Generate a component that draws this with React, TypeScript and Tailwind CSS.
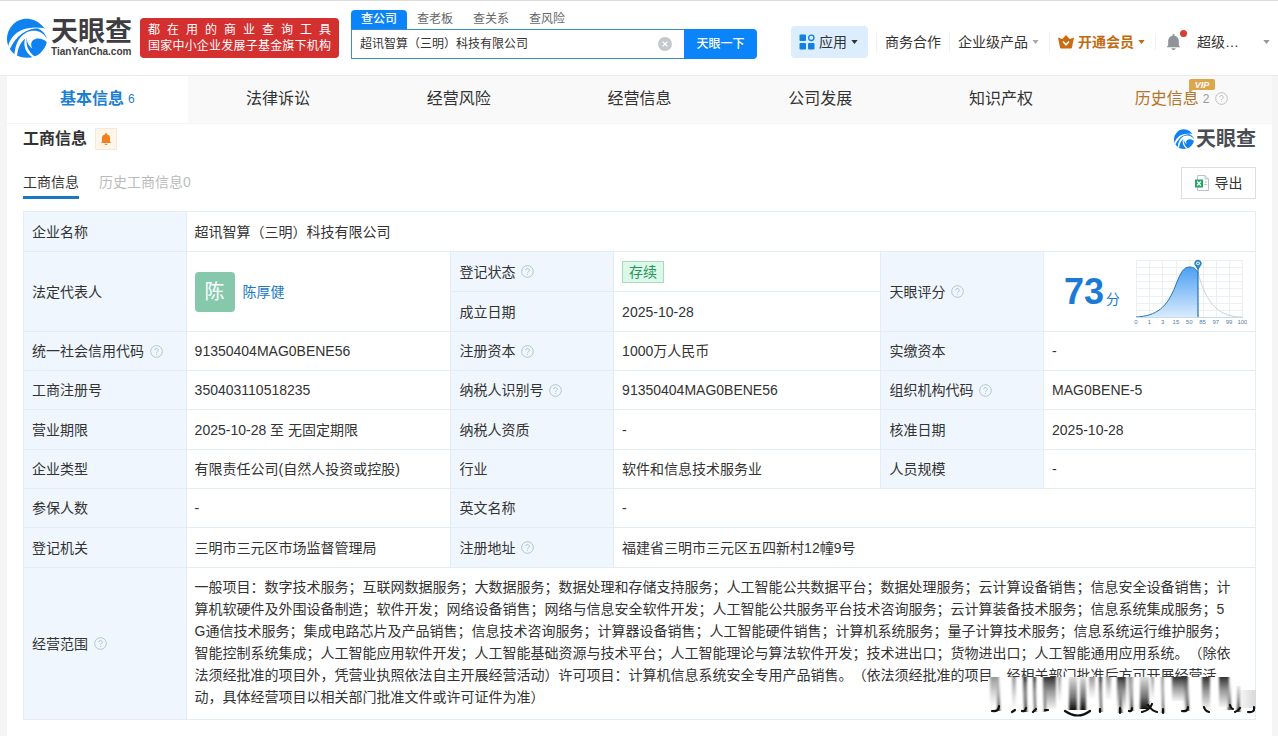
import { useState } from "react";
import type { ReactNode } from "react";

const NAV = ["法律诉讼", "经营风险", "经营信息", "公司发展", "知识产权"];
const SEARCH_TABS = ["查公司", "查老板", "查关系", "查风险"];

const SCOPE = [
  "一般项目：数字技术服务；互联网数据服务；大数据服务；数据处理和存储支持服务；人工智能公共数据平台；数据处理服务；云计算设备销售；信息安全设备销售；计",
  "算机软硬件及外围设备制造；软件开发；网络设备销售；网络与信息安全软件开发；人工智能公共服务平台技术咨询服务；云计算装备技术服务；信息系统集成服务；5",
  "G通信技术服务；集成电路芯片及产品销售；信息技术咨询服务；计算器设备销售；人工智能硬件销售；计算机系统服务；量子计算技术服务；信息系统运行维护服务；",
  "智能控制系统集成；人工智能应用软件开发；人工智能基础资源与技术平台；人工智能理论与算法软件开发；技术进出口；货物进出口；人工智能通用应用系统。（除依",
  "法须经批准的项目外，凭营业执照依法自主开展经营活动）许可项目：计算机信息系统安全专用产品销售。（依法须经批准的项目，经相关部门批准后方可开展经营活",
  "动，具体经营项目以相关部门批准文件或许可证件为准）",
];

// x, width, height, tone of every streak in the seal
const STREAKS = [
  [2, 9, 32, "b"],
  [24, 4, 34, "b"],
  [35, 4, 35, "a"],
  [45, 3, 35, "a"],
  [55, 13, 34, "a"],
  [70, 3, 28, "b"],
  [81, 8, 35, "c"],
  [92, 6, 35, "c"],
  [101, 6, 24, "b"],
  [111, 3, 36, "a"],
  [118, 5, 26, "b"],
  [129, 9, 34, "a"],
  [140, 5, 35, "b"],
  [152, 9, 34, "c"],
  [163, 3, 26, "b"],
  [173, 3, 36, "b"],
  [184, 13, 26, "a"],
  [196, 4, 36, "a"],
  [214, 8, 34, "a"],
  [231, 10, 32, "a"],
] as const;

function Swirl({ className }: { className: string }) {
  return (
    <svg viewBox="0 0 38 38" className={className} aria-hidden="true">
      <path d="M33 7C26 -1 12 -2 5 7C-3 16 -1 29 8 35C15 39 26 39 32 33C36 29 37.500 26 38 21C37 15 34 12 29 10C32 9 34 9 36 10Z" fill="#0f82f0" />
      <path d="M1 27C4 15 15 6 36 10C21 8 10 14 2.500 30Z" fill="#fff" />
      <path d="M7 35C8 25 11 18 18 14C25 10.500 34 12 38 20L38 23C34 19 28 18.500 25 21C22.500 23 22.500 26 24 29C20 26 18.500 22 19 18.500C13 22 10.500 28 9.500 36Z" fill="#fff" />
      <path d="M19 18C17.500 26 20 32 27 37L24.500 37.500C17 33 15 25 17.500 19Z" fill="#fff" />
    </svg>
  );
}

function Caret({ className }: { className: string }) {
  return (
    <svg viewBox="0 0 8 5" className={`h-1 w-[7px] shrink-0 ${className}`} fill="currentColor" aria-hidden="true">
      <path d="M0 0h8L4 5z" />
    </svg>
  );
}

function Hint({ className = "text-[#a9c3d6]" }: { className?: string }) {
  return (
    <svg viewBox="0 0 14 14" className={`ml-1.5 inline-block size-[13px] shrink-0 ${className}`} fill="none" stroke="currentColor" aria-hidden="true">
      <circle cx="7" cy="7" r="6.3" />
      <path d="M5.1 5.6a1.9 1.9 0 1 1 2.8 1.7c-.7.4-.9.7-.9 1.4M7 9.8v1" />
    </svg>
  );
}

function Bell({ className }: { className: string }) {
  return (
    <svg viewBox="0 0 16 18" className={className} fill="currentColor" aria-hidden="true">
      <path d="M7 0h2v2c3 .5 5 2.700 5 5.500V13l1.500 1.500v.5H.5v-.5L2 13V7.500C2 4.700 4 2.500 7 2zM5.500 16h5c-.3 1.200-1.300 2-2.500 2s-2.200-.8-2.500-2z" />
    </svg>
  );
}

function Label({ children, hint, rowSpan }: { children: ReactNode; hint?: boolean; rowSpan?: number }) {
  return (
    <th scope="row" rowSpan={rowSpan} className="border border-[#e3edf4] bg-[#eff6fd] px-2 text-left font-normal">
      <span className="flex items-center">
        {children}
        {hint ? <Hint /> : null}
      </span>
    </th>
  );
}

function Value({ children, colSpan, rowSpan }: { children: ReactNode; colSpan?: number; rowSpan?: number }) {
  return (
    <td colSpan={colSpan} rowSpan={rowSpan} className="border border-[#e3edf4] px-2">
      {children}
    </td>
  );
}

function ScoreChart() {
  return (
    <svg viewBox="0 0 114 70" className="h-[70px] w-[114px] shrink-0" role="img" aria-label="天眼评分">
      <defs>
        <linearGradient id="score" x1="0" y1="0" x2="0" y2="1">
          <stop offset="0" stopColor="#4b9ff3" />
          <stop offset="1" stopColor="#d9ebfd" />
        </linearGradient>
      </defs>
      <g stroke="#edf0f3" strokeWidth="1" fill="none">
        <path d="M3 3.500H110M3 10.500H110M3 17.500H110M3 24.500H110M3 31.500H110M3 39.500H110M3 46.500H110M3 53.500H110" />
        <path d="M3.500 3V60M16.500 3V60M29.500 3V60M43.500 3V60M56.500 3V60M70.500 3V60M83.500 3V60M96.500 3V60M109.500 3V60" />
      </g>
      <path d="M3 60C24 59 34 50 42 30C48 14 51 10 57 10C61 10 63 12 65 16V60Z" fill="url(#score)" />
      <path d="M3 60C24 59 34 50 42 30C48 14 51 10 57 10C61 10 63 12 65 16" fill="none" stroke="#2a76ac" />
      <path d="M65 16C72 40 81 60 109 60" fill="none" stroke="#ccd3dd" />
      <path d="M3 60.500H110" stroke="#c5dcea" />
      <path d="M65 10V60" stroke="#2272ad" strokeWidth="1.200" />
      <path d="M65 13L62 8.500A3.600 3.600 0 1 1 68 8.500Z" fill="#2b86bd" />
      <circle cx="65" cy="6.300" r="1.900" fill="#d9f2fa" />
      <circle cx="65" cy="6.300" r="0.900" fill="#2b86bd" />
      <g fontSize="6" fontFamily="Liberation Sans, sans-serif" fill="#557f9b" textAnchor="middle">
        {["0", "1", "3", "15", "50", "85", "97", "99", "100"].map((t, i) => (
          <text key={t} x={3 + i * 13.3} y="67">
            {t}
          </text>
        ))}
      </g>
    </svg>
  );
}

function Seal() {
  return (
    <svg viewBox="0 0 268 44" className="absolute -right-px bottom-px h-11 w-[268px]" aria-hidden="true">
      <defs>
        <linearGradient id="a" x1="0" y1="0" x2="0" y2="1">
          <stop offset="0" stopColor="#333" />
          <stop offset="0.45" stopColor="#999" />
          <stop offset="1" stopColor="#f4f4f4" />
        </linearGradient>
        <linearGradient id="b" x1="0" y1="0" x2="0" y2="1">
          <stop offset="0" stopColor="#999" />
          <stop offset="0.6" stopColor="#ddd" />
          <stop offset="1" stopColor="#fff" />
        </linearGradient>
        <linearGradient id="c" x1="0" y1="0" x2="0" y2="1">
          <stop offset="0" stopColor="#ddd" />
          <stop offset="0.6" stopColor="#777" />
          <stop offset="1" stopColor="#111" />
        </linearGradient>
        <linearGradient id="d" x1="0" y1="0" x2="0" y2="1">
          <stop offset="0" stopColor="#aaa" stopOpacity="0" />
          <stop offset="1" stopColor="#111" />
        </linearGradient>
        <linearGradient id="e" x1="0" y1="0" x2="1" y2="0">
          <stop offset="0" stopColor="#ccc" stopOpacity="0" />
          <stop offset="1" stopColor="#bbb" />
        </linearGradient>
        <filter id="soft" x="-5%" y="-5%" width="110%" height="110%">
          <feGaussianBlur stdDeviation="0.9 0.1" />
        </filter>
      </defs>
      <path d="M0 3H248V38H0Z" fill="#fff" />
      <g filter="url(#soft)">
        {STREAKS.map(([x, w, h, tone]) => (
          <rect key={x} x={x} y="3" width={w} height={h - 2} fill={`url(#${tone})`} />
        ))}
        <path d="M9 3h3v34H9zM36 8h3v30h-3zM56 8h2v30h-2zM46 8h2v30h-2zM112 8h2v30h-2zM131 6h3v33h-3zM142 6h3v31h-3zM174 6h2v33h-2zM198 6h3v31h-3zM240 4h3v32h-3zM249 12h3v26h-3z" fill="url(#d)" />
        <path d="M246 16H268V34H246Z" fill="url(#e)" opacity="0.6" />
      </g>
      <g fill="none" stroke="#111" strokeWidth="2.200" strokeLinecap="round">
        <path d="M11 32Q11 38 4 37M27 36L24 38M38 34Q37 38 34 37M48 35L45 38M57 36H60M77 37Q90 46 102 37M112 35V38M132 34V39M144 34Q144 38 141 37M154 38Q162 36 164 30M160 31Q164 37 169 38M175 35V39M200 33Q200 38 194 37M216 33Q217 37 221 38M242 31Q243 35 245 35M252 34Q250 37 247 38M266 33Q267 39 260 38" />
      </g>
    </svg>
  );
}

function Header() {
  const [query, setQuery] = useState("超讯智算（三明）科技有限公司");
  const [tab, setTab] = useState(0);

  return (
    <header className="flex h-[76px] items-center border-t border-b border-t-[#dcdcdc] border-b-[#ebebeb] bg-white pr-2 pl-[7px]">
      <a href="#home" className="flex shrink-0 items-center gap-1">
        <Swirl className="size-10" />
        <span className="flex flex-col text-[#3e3e42]">
          <span className="text-[27px] leading-7 font-bold">天眼查</span>
          <span className="text-[10px] leading-3 font-bold">TianYanCha.com</span>
        </span>
      </a>
      <div className="ml-2 w-[199px] shrink-0 rounded-sm bg-[#d3302f] px-2 py-1 text-xs leading-4 text-white">
        <p className="[text-align-last:justify]">都 在 用 的 商 业 查 询 工 具</p>
        <p className="[text-align-last:justify]">国家中小企业发展子基金旗下机构</p>
      </div>

      <form className="mb-2 ml-3 w-[406px] shrink-0" onSubmit={(e) => e.preventDefault()}>
        <div className="flex">
          {SEARCH_TABS.map((t, i) => (
            <button
              key={t}
              type="button"
              onClick={() => setTab(i)}
              className={
                i === tab
                  ? "h-[19px] w-14 rounded-t-sm bg-[#0a84f8] text-xs font-medium text-white"
                  : "h-[19px] w-14 text-xs text-[#666]"
              }
            >
              {t}
            </button>
          ))}
        </div>
        <div className="flex h-[30px]">
          <div className="flex flex-1 items-center border border-r-0 border-[#3d8dc9] pr-3 pl-2">
            <input
              aria-label="公司名称"
              value={query}
              onChange={(e) => setQuery(e.target.value)}
              className="w-full min-w-0 flex-1 text-xs text-[#333] outline-none"
            />
            <button type="button" aria-label="清空" onClick={() => setQuery("")}>
              <svg viewBox="0 0 14 14" className="size-3.5" aria-hidden="true">
                <circle cx="7" cy="7" r="7" fill="#c5c8cf" />
                <path d="M4.600 4.600l4.800 4.800M9.400 4.600l-4.800 4.800" stroke="#fff" strokeWidth="1.300" />
              </svg>
            </button>
          </div>
          <button className="w-[73px] rounded-r-sm bg-[#0a84f8] text-xs font-medium text-white">天眼一下</button>
        </div>
      </form>

      <nav className="mt-2 ml-auto flex shrink-0 items-center text-sm text-[#333]">
        <button className="flex h-8 w-[77px] items-center rounded-sm bg-[#dcedfd] pl-2">
          <svg viewBox="0 0 16 16" className="mr-1 size-4" fill="#1480e0" aria-hidden="true">
            <rect x="0.500" y="0.500" width="6.500" height="6.500" rx="1" />
            <rect x="0.500" y="9" width="6.500" height="6.500" rx="1" />
            <rect x="9" y="9" width="6.500" height="6.500" rx="1" />
            <circle cx="12.300" cy="3.800" r="2.700" fill="none" stroke="#1480e0" strokeWidth="1.300" />
          </svg>
          应用
          <Caret className="ml-1 text-[#333]" />
        </button>
        <a href="#coop" className="ml-2 border-l border-[#f0f0f0] pl-2">
          商务合作
        </a>
        <a href="#products" className="ml-2 flex items-center border-l border-[#f0f0f0] pl-2">
          企业级产品
          <Caret className="ml-1 text-[#aaa]" />
        </a>
        <a href="#vip" className="ml-2.5 flex items-center border-l border-[#f0f0f0] pl-2 font-bold text-[#c26a12]">
          <svg viewBox="0 0 16 14" className="mr-1 h-3.5 w-4" aria-hidden="true">
            <path d="M0 2.500L4.300 4L8 0L11.700 4L16 2.500L14 12.500Q13.800 13.500 12.800 13.500H3.200Q2.200 13.500 2 12.500Z" fill="#cc6b10" />
            <path d="M5 6.500L8 9.800L11 6.500" fill="none" stroke="#fff" strokeWidth="1.500" />
          </svg>
          开通会员
          <Caret className="ml-1" />
        </a>
        <button aria-label="消息" className="relative ml-2.5 border-l border-[#f0f0f0] pl-2.5">
          <Bell className="h-4 w-[15px] text-[#8f9499]" />
          <span className="absolute -top-1 -right-1.5 size-[7px] rounded-full bg-[#dc3b35]" />
        </button>
        <button className="ml-4 flex items-center">
          超级…
          <Caret className="ml-6 text-[#999]" />
        </button>
      </nav>
    </header>
  );
}

function Tabs() {
  return (
    <nav className="grid h-12 grid-cols-7 border-b border-[#f4f4f4] bg-[#f9f9f9] text-base text-[#333]">
      <a href="#base" className="flex items-center justify-center bg-white pb-0.5 font-bold text-[#1c80cf]">
        基本信息
        <span className="ml-1 text-xs font-normal">6</span>
      </a>
      {NAV.map((t) => (
        <a key={t} href={`#${t}`} className="flex items-center justify-center pb-0.5">
          {t}
        </a>
      ))}
      <a href="#history" className="flex items-center justify-center pb-0.5 text-[#b5732c]">
        <span className="relative">
          历史信息
          <svg viewBox="0 0 26 14" className="absolute -top-2 -right-4 h-3.5 w-[26px]" aria-hidden="true">
            <path d="M2 0H24Q26 0 26 2V9Q26 11 24 11H4L0 14V2Q0 0 2 0Z" fill="#dda54c" />
            <text x="13" y="9" fontSize="9" fontWeight="700" fontStyle="italic" fontFamily="Liberation Sans, sans-serif" fill="#fff" textAnchor="middle">
              VIP
            </text>
          </svg>
        </span>
        <span className="ml-1 text-xs text-[#999]">2</span>
        <Hint className="text-[#b9bcc4]" />
      </a>
    </nav>
  );
}

function InfoTable() {
  return (
    <table className="mt-3 w-full table-fixed border-collapse text-sm text-[#333]">
      <colgroup>
        <col className="w-[13.2%]" />
        <col className="w-[21.5%]" />
        <col className="w-[13.2%]" />
        <col className="w-[21.7%]" />
        <col className="w-[13.2%]" />
        <col />
      </colgroup>
      <tbody>
        <tr className="h-10">
          <Label>企业名称</Label>
          <Value colSpan={5}>超讯智算（三明）科技有限公司</Value>
        </tr>
        <tr className="h-10">
          <Label rowSpan={2}>法定代表人</Label>
          <Value rowSpan={2}>
            <div className="flex items-center gap-2">
              <span className="flex size-10 items-center justify-center rounded-sm bg-[#85c8ac] text-xl text-white">陈</span>
              <a href="#person" className="text-[#1a78c8]">
                陈厚健
              </a>
            </div>
          </Value>
          <Label hint>登记状态</Label>
          <Value>
            <span className="inline-block border border-[#a5dcc0] bg-[#dbf8e8] px-1.5 leading-5 text-[#2a9560]">存续</span>
          </Value>
          <Label rowSpan={2} hint>
            天眼评分
          </Label>
          <Value rowSpan={2}>
            <div className="flex items-center justify-between pl-3">
              <span className="text-[#1c7ad4]">
                <b className="text-4xl">73</b>
                <span className="ml-0.5">分</span>
              </span>
              <ScoreChart />
            </div>
          </Value>
        </tr>
        <tr className="h-10">
          <Label>成立日期</Label>
          <Value>2025-10-28</Value>
        </tr>
        <tr className="h-[39px]">
          <Label hint>统一社会信用代码</Label>
          <Value>91350404MAG0BENE56</Value>
          <Label hint>注册资本</Label>
          <Value>1000万人民币</Value>
          <Label>实缴资本</Label>
          <Value>-</Value>
        </tr>
        <tr className="h-[39px]">
          <Label>工商注册号</Label>
          <Value>350403110518235</Value>
          <Label hint>纳税人识别号</Label>
          <Value>91350404MAG0BENE56</Value>
          <Label hint>组织机构代码</Label>
          <Value>MAG0BENE-5</Value>
        </tr>
        <tr className="h-10">
          <Label>营业期限</Label>
          <Value>2025-10-28 至 无固定期限</Value>
          <Label>纳税人资质</Label>
          <Value>-</Value>
          <Label>核准日期</Label>
          <Value>2025-10-28</Value>
        </tr>
        <tr className="h-[39px]">
          <Label>企业类型</Label>
          <Value>有限责任公司(自然人投资或控股)</Value>
          <Label>行业</Label>
          <Value>软件和信息技术服务业</Value>
          <Label>人员规模</Label>
          <Value>-</Value>
        </tr>
        <tr className="h-[39px]">
          <Label>参保人数</Label>
          <Value>-</Value>
          <Label>英文名称</Label>
          <Value colSpan={3}>-</Value>
        </tr>
        <tr className="h-10">
          <Label>登记机关</Label>
          <Value>三明市三元区市场监督管理局</Value>
          <Label hint>注册地址</Label>
          <Value colSpan={3}>福建省三明市三元区五四新村12幢9号</Value>
        </tr>
        <tr>
          <Label hint>经营范围</Label>
          <td colSpan={5} className="relative border border-[#e3edf4] px-2 pt-2 pb-[11px] leading-[22px]">
            {SCOPE.map((line) => (
              <span key={line} className="block whitespace-nowrap">
                {line}
              </span>
            ))}
            <Seal />
          </td>
        </tr>
      </tbody>
    </table>
  );
}

export default function App() {
  return (
    <div className="min-h-screen bg-[#f5f5f5] font-['Liberation_Sans','Noto_Sans_CJK_SC',sans-serif] [text-spacing-trim:space-all]">
      <Header />
      <main className="mr-1.5 ml-[7px] min-h-[calc(100vh-76px)] bg-white">
        <Tabs />
        <section className="px-4">
          <div className="flex items-center justify-between pt-[3px]">
            <h2 className="flex items-center gap-2 text-base font-bold text-[#333]">
              工商信息
              <button aria-label="订阅" className="flex size-[22px] items-center justify-center border border-[#fbe8d4] bg-[#fff5ea]">
                <Bell className="size-3 text-[#f0811c]" />
              </button>
            </h2>
            <div className="flex items-center gap-0.5">
              <Swirl className="size-5" />
              <span className="text-xl leading-6 font-bold text-[#4b4d55]">天眼查</span>
            </div>
          </div>
          <div className="mt-4 flex items-end justify-between">
            <div className="flex gap-5 text-sm">
              <button className="border-b-[3px] border-[#1c78bd] pb-1 text-[#333]">工商信息</button>
              <button className="border-b-[3px] border-transparent pb-1 text-[#bbb]">历史工商信息0</button>
            </div>
            <button className="flex h-8 w-[75px] items-center justify-center gap-1.5 border border-[#dedede] text-sm text-[#333]">
              <svg viewBox="0 0 14 16" className="h-4 w-3.5" aria-hidden="true">
                <path d="M2.500 0.500H10L13.500 4V15.500H2.500Z" fill="#fff" stroke="#bcc3c6" />
                <path d="M10 0.500V4H13.500M9.500 7H12M9.500 9.500H12" fill="none" stroke="#bcc3c6" />
                <rect x="0" y="4.500" width="8" height="8" fill="#27a567" />
                <path d="M2.200 6.500L5.800 10.500M5.800 6.500L2.200 10.500" stroke="#fff" strokeWidth="1.200" />
              </svg>
              导出
            </button>
          </div>
          <InfoTable />
        </section>
      </main>
    </div>
  );
}
